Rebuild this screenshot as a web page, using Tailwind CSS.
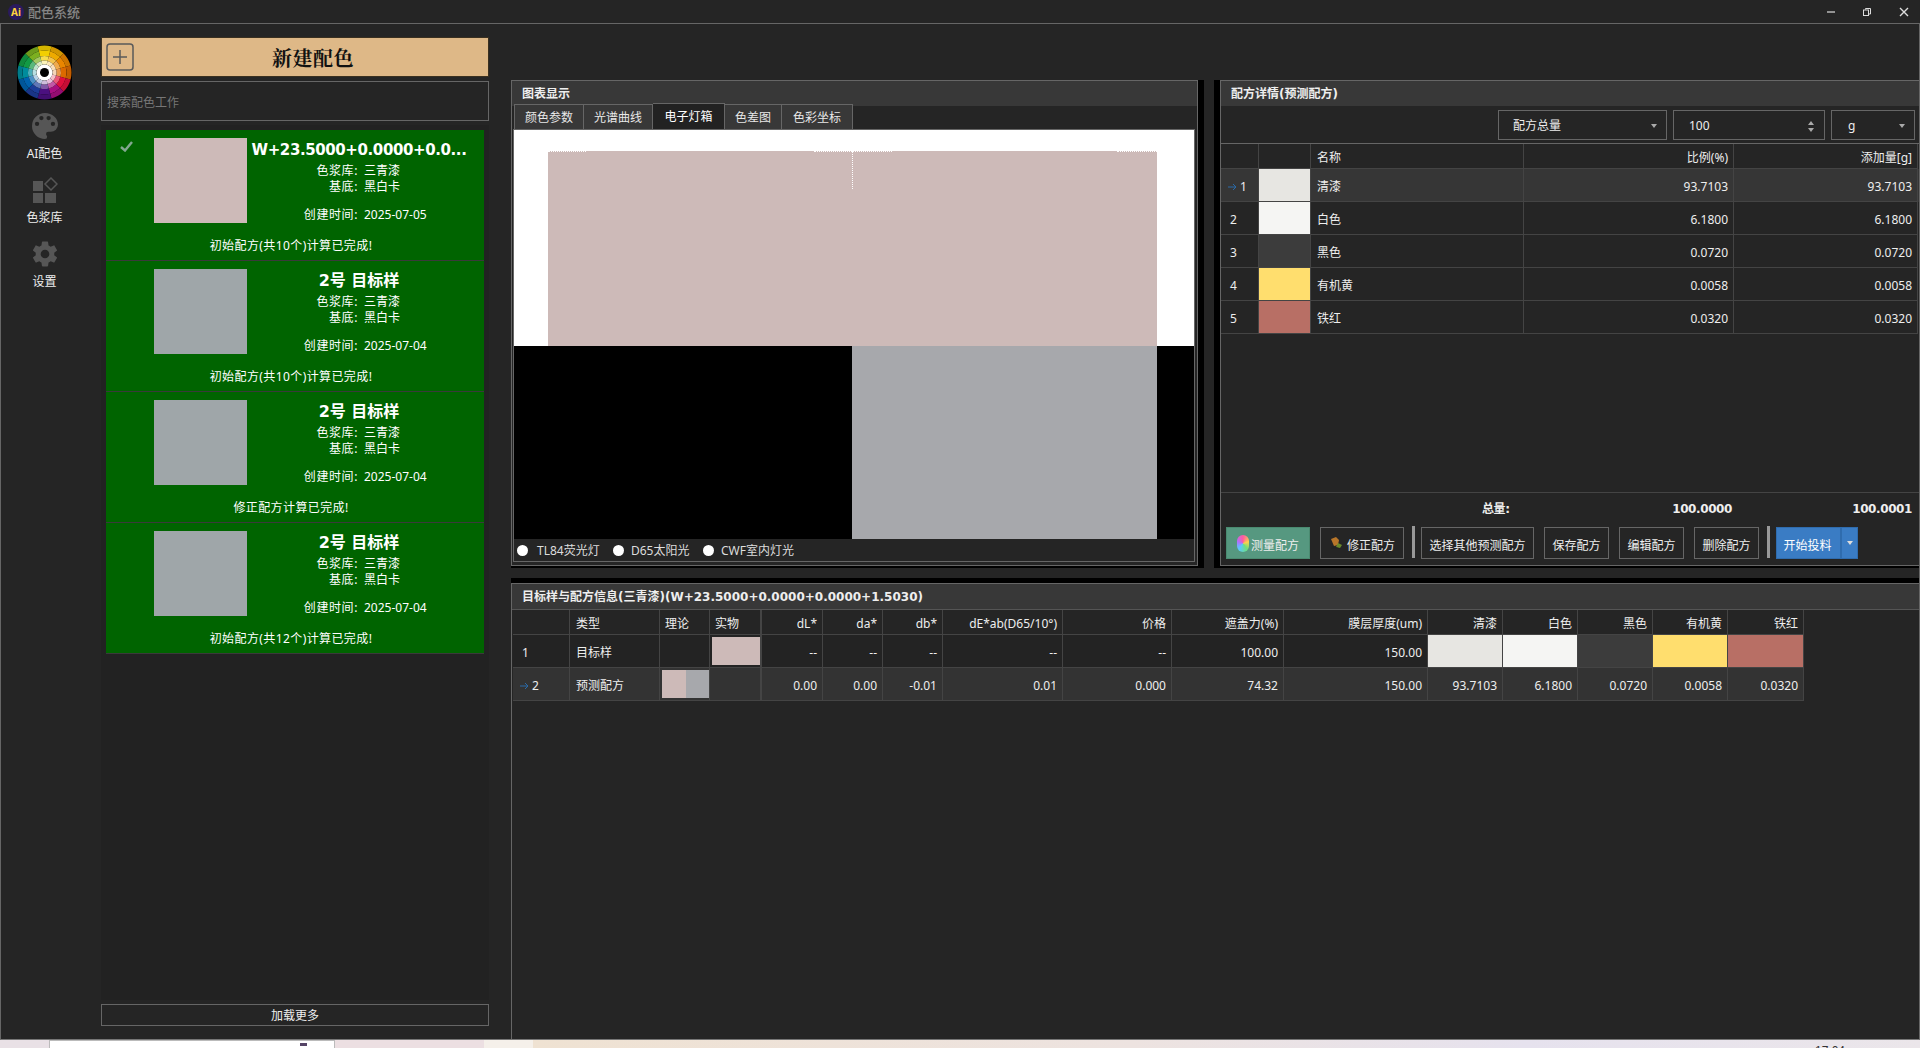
<!DOCTYPE html>
<html lang="zh">
<head>
  <meta charset="UTF-8" />
  <title>配色系统</title>
  <script src="https://cdn.jsdelivr.net/npm/@tailwindcss/browser@4"></script>
</head>
<body class="bg-[#252525]">
<div class="w-[1920px] h-[1048px] overflow-hidden flex flex-col bg-[#252525] text-[12px] leading-[16px] text-[#eeeeee] [font-family:'Noto_Sans','Noto_Sans_CJK_SC',sans-serif]">

  <!-- 标题栏 -->
  <div class="h-[23px] shrink-0 flex items-center pl-[8px] relative">
    <div class="w-[16px] h-[16px] rounded-full bg-[#2a1a5e] flex items-center justify-center text-[10px] font-bold text-[#ffd23c] leading-none">Ai</div>
    <span class="ml-[4px] text-[13px] text-[#858585] font-medium">配色系统</span>
    <div class="ml-auto flex items-center pr-[11px]">
      <svg class="w-[8px] h-[10px]" viewBox="0 0 8 10"><path d="M0 5h8" stroke="#ddd" stroke-width="1.2"/></svg>
      <svg class="w-[8px] h-[8px] ml-[28px]" viewBox="0 0 8 8" fill="none" stroke="#ddd"><path d="M2.5 1.5V.5h5V6H6"/><rect x=".5" y="2" width="5" height="5.5"/></svg>
      <svg class="w-[10px] h-[10px] ml-[28px]" viewBox="0 0 10 10"><path d="M1 1l8 8M9 1l-8 8" stroke="#ddd" stroke-width="1.4"/></svg>
    </div>
  </div>

  <!-- 主体 -->
  <div class="h-[1017px] shrink-0 flex border border-[#666666] border-b-[#777777]">

    <!-- 侧边栏 -->
    <div class="w-[87px] shrink-0 flex flex-col items-center pt-[21px]">
      <svg id="wheel" class="w-[55px] h-[55px] bg-black" viewBox="0 0 55 55"></svg>
      <div class="w-full h-[64px] mt-[13px] flex flex-col items-center">
        <svg class="w-[26px] h-[26px]" viewBox="3 3 18 18" fill="#565656"><path d="M17.5,12A1.5,1.5 0 0,1 16,10.5A1.5,1.5 0 0,1 17.5,9A1.5,1.5 0 0,1 19,10.5A1.5,1.5 0 0,1 17.5,12M14.5,8A1.5,1.5 0 0,1 13,6.5A1.5,1.5 0 0,1 14.5,5A1.5,1.5 0 0,1 16,6.5A1.5,1.5 0 0,1 14.5,8M9.5,8A1.5,1.5 0 0,1 8,6.5A1.5,1.5 0 0,1 9.5,5A1.5,1.5 0 0,1 11,6.5A1.5,1.5 0 0,1 9.5,8M6.5,12A1.5,1.5 0 0,1 5,10.5A1.5,1.5 0 0,1 6.5,9A1.5,1.5 0 0,1 8,10.5A1.5,1.5 0 0,1 6.5,12M12,3A9,9 0 0,0 3,12A9,9 0 0,0 12,21A1.5,1.5 0 0,0 13.5,19.5C13.5,19.11 13.35,18.76 13.11,18.5C12.88,18.23 12.73,17.88 12.73,17.5A1.5,1.5 0 0,1 14.23,16H16A5,5 0 0,0 21,11C21,6.58 16.97,3 12,3Z"/></svg>
        <span class="mt-[7px]">AI配色</span>
      </div>
      <div class="w-full h-[64px] flex flex-col items-center">
        <svg class="w-[26px] h-[26px]" viewBox="0 0 26 26" fill="#565656"><rect x="1" y="4" width="10" height="10"/><rect x="1" y="16" width="10" height="10"/><rect x="13" y="16" width="11" height="10"/><path d="M19 1l6 6-6 6-6-6z" fill="none" stroke="#565656" stroke-width="1.5"/></svg>
        <span class="mt-[7px]">色浆库</span>
      </div>
      <div class="w-full h-[64px] flex flex-col items-center">
        <svg class="w-[26px] h-[26px]" viewBox="1.5 1.5 21 21" fill="#565656"><path d="M12,15.5A3.5,3.5 0 0,1 8.5,12A3.5,3.5 0 0,1 12,8.5A3.5,3.5 0 0,1 15.5,12A3.5,3.5 0 0,1 12,15.5M19.43,12.97C19.47,12.65 19.5,12.33 19.5,12C19.5,11.67 19.47,11.34 19.43,11L21.54,9.37C21.73,9.22 21.78,8.95 21.66,8.73L19.66,5.27C19.54,5.05 19.27,4.96 19.05,5.05L16.56,6.05C16.04,5.66 15.5,5.32 14.87,5.07L14.5,2.42C14.46,2.18 14.25,2 14,2H10C9.75,2 9.54,2.18 9.5,2.42L9.13,5.07C8.5,5.32 7.96,5.66 7.44,6.05L4.95,5.05C4.73,4.96 4.46,5.05 4.34,5.27L2.34,8.73C2.21,8.95 2.27,9.22 2.46,9.37L4.57,11C4.53,11.34 4.5,11.67 4.5,12C4.5,12.33 4.53,12.65 4.57,12.97L2.46,14.63C2.27,14.78 2.21,15.05 2.34,15.27L4.34,18.73C4.46,18.95 4.73,19.03 4.95,18.95L7.44,17.94C7.96,18.34 8.5,18.68 9.13,18.93L9.5,21.58C9.54,21.82 9.75,22 10,22H14C14.25,22 14.46,21.82 14.5,21.58L14.87,18.93C15.5,18.67 16.04,18.34 16.56,17.94L19.05,18.95C19.27,19.03 19.54,18.95 19.66,18.73L21.66,15.27C21.78,15.05 21.73,14.78 21.54,14.63L19.43,12.97Z"/></svg>
        <span class="mt-[7px]">设置</span>
      </div>
    </div>

    <!-- 配色工作列表 -->
    <div class="w-[388px] ml-[13px] shrink-0 flex flex-col pt-[13px]">
      <div class="h-[40px] bg-[#deb887] border border-[#3a3020] flex items-center text-[#111111] pl-[4px]">
        <svg class="w-[28px] h-[28px] shrink-0" viewBox="0 0 28 28" fill="none" stroke="#5a5a5a" stroke-width="1.5"><rect x="1" y="1" width="26" height="26" rx="3"/><path d="M14 7v14M7 14h14"/></svg>
        <span class="flex-1 text-center pt-[2px] pl-[4px] text-[20px] leading-[24px] font-bold tracking-[0.5px] [font-family:'Noto_Serif_CJK_SC','Liberation_Serif','Noto_Sans_CJK_SC',serif]">新建配色</span>
      </div>
      <div class="h-[40px] mt-[4px] border border-[#666666] flex items-center pl-[5px] pt-[3px] text-[#777777]">搜索配色工作</div>
      <div id="cards" class="h-[875px] mt-[4px] bg-[#222222] px-[5px] pt-[5px]"></div>
      <div class="h-[22px] mt-[4px] border border-[#666666] flex items-center justify-center pt-[1px]">加载更多</div>
    </div>

    <!-- 右侧 -->
    <div class="w-[1408px] ml-[22px] shrink-0 flex flex-col pt-[56px]">
      <div class="h-[488px] flex shrink-0">

        <!-- 图表显示 -->
        <div class="w-[693px] shrink-0 border-r-[6px] border-b-[2px] border-black">
          <div class="h-full border border-[#666666] flex flex-col">
            <div class="h-[25px] shrink-0 bg-[#383838] pl-[10px] pt-[5px] font-bold">图表显示</div>
            <div class="h-[26px] -mt-[3px] shrink-0 flex items-end pl-[2px] text-[#e8e8e8]">
              <div class="w-[70px] h-[25px] pt-[1px] border border-[#666666] border-b-0 bg-[#383838] flex items-center justify-center">颜色参数</div>
              <div class="w-[69px] h-[25px] pt-[1px] border border-[#666666] border-l-0 border-b-0 bg-[#383838] flex items-center justify-center">光谱曲线</div>
              <div class="w-[72px] h-[26px] pt-[1px] border border-[#666666] border-l-0 border-b-0 bg-[#222222] flex items-center justify-center text-white">电子灯箱</div>
              <div class="w-[57px] h-[25px] pt-[1px] border border-[#666666] border-l-0 border-b-0 bg-[#383838] flex items-center justify-center">色差图</div>
              <div class="w-[71px] h-[25px] pt-[1px] border border-[#666666] border-l-0 border-b-0 bg-[#383838] flex items-center justify-center">色彩坐标</div>
            </div>
            <div class="flex-1 ml-[1px] mr-[2px] mb-[3px] border border-[#666666] flex flex-col">
              <div class="h-[216px] shrink-0 bg-white pt-[21px] pl-[34px]">
                <div class="relative w-[609px] h-[195px] bg-[#cdbab8]">
                  <div class="absolute left-[304px] top-0 h-[38px] border-l border-dotted border-white"></div>
                  <div class="absolute left-0 top-0 w-[38px] border-t border-dotted border-white"></div>
                  <div class="absolute left-[266px] top-0 w-[78px] border-t border-dotted border-white"></div>
                  <div class="absolute right-0 top-0 w-[40px] border-t border-dotted border-white"></div>
                </div>
              </div>
              <div class="h-[193px] shrink-0 bg-black pl-[338px]">
                <div class="w-[305px] h-full bg-[#a7a8ac]"></div>
              </div>
              <div class="flex-1 flex items-center pl-[3px] pt-[1px] text-[#dddddd]">
                <span class="w-[11px] h-[11px] rounded-full bg-white"></span><span class="ml-[9px] w-[76px]">TL84荧光灯</span>
                <span class="w-[11px] h-[11px] rounded-full bg-white"></span><span class="ml-[2px] pl-[5px] w-[77px]">D65太阳光</span>
                <span class="w-[11px] h-[11px] rounded-full bg-white"></span><span class="ml-[2px] pl-[5px]">CWF室内灯光</span>
              </div>
            </div>
          </div>
        </div>

        <div class="w-[10px] shrink-0"></div>

        <!-- 配方详情 -->
        <div class="w-[705px] shrink-0 border-l-[6px] border-b-[2px] border-black">
          <div class="h-full border border-[#666666] border-r-0 flex flex-col">
            <div class="h-[25px] shrink-0 bg-[#383838] pl-[10px] pt-[5px] font-bold whitespace-nowrap [font-family:'DejaVu_Sans','Noto_Sans_CJK_SC',sans-serif]">配方详情(预测配方)</div>
            <div class="h-[37px] shrink-0 flex items-start pt-[4px] pl-[277px]">
              <div class="w-[169px] h-[30px] pt-[2px] border border-[#666666] flex items-center pl-[14px] pr-[9px]">配方总量<span class="ml-auto border-x-[3px] border-t-[4px] border-x-transparent border-t-[#aaaaaa]"></span></div>
              <div class="w-[152px] h-[30px] pt-[2px] ml-[6px] border border-[#666666] flex items-center pl-[15px] pr-[10px]">100
                <span class="ml-auto flex flex-col gap-[3px]"><span class="border-x-[3px] border-b-[4px] border-x-transparent border-b-[#aaaaaa]"></span><span class="border-x-[3px] border-t-[4px] border-x-transparent border-t-[#aaaaaa]"></span></span>
              </div>
              <div class="w-[84px] h-[30px] pt-[2px] ml-[6px] border border-[#666666] flex items-center pl-[16px] pr-[9px]">g<span class="ml-auto border-x-[3px] border-t-[4px] border-x-transparent border-t-[#aaaaaa]"></span></div>
            </div>
            <div id="detail" class="shrink-0 border-t border-[#666666]"></div>
            <div class="flex-1"></div>
            <div class="h-[35px] shrink-0 border-t border-[#444444] relative font-bold [font-family:'DejaVu_Sans','Noto_Sans_CJK_SC',sans-serif] tracking-[-0.4px]">
              <span class="absolute left-[261px] top-[8px]">总量:</span>
              <span class="absolute right-[187px] top-[8px]">100.0000</span>
              <span class="absolute right-[7px] top-[8px]">100.0001</span>
            </div>
            <div class="h-[38px] shrink-0 flex items-start pl-[5px]">
              <button class="w-[84px] h-[32px] pt-[5px] bg-[#569880] border border-[#4a8a70] flex items-center justify-center gap-[2px]"><span class="w-[12px] h-[17px] -mt-[5px] rounded-full bg-[conic-gradient(#ff5aa0,#ffd24a,#6fe07a,#5ac8ff,#b070ff,#ff5aa0)]"></span>测量配方</button>
              <button class="w-[84px] h-[32px] pt-[5px] ml-[10px] border border-[#666666] flex items-center justify-center gap-[4px]"><svg class="w-[14px] h-[14px] -mt-[5px]" viewBox="0 0 14 14"><path d="M2 3l5-2 3 3-1 5-4 1z" fill="#b8762a"/><path d="M9 7l4 2-2 3-4-1z" fill="#6a8a2a"/><path d="M3 10l9 3H2z" fill="#222"/></svg>修正配方</button>
              <div class="w-[3px] h-[32px] ml-[8px] -mt-[1px] bg-[#999999]"></div>
              <button class="w-[113px] h-[32px] pt-[5px] ml-[6px] border border-[#666666]">选择其他预测配方</button>
              <button class="w-[65px] h-[32px] pt-[5px] ml-[10px] border border-[#666666]">保存配方</button>
              <button class="w-[65px] h-[32px] pt-[5px] ml-[10px] border border-[#666666]">编辑配方</button>
              <button class="w-[65px] h-[32px] pt-[5px] ml-[10px] border border-[#666666]">删除配方</button>
              <div class="w-[3px] h-[32px] ml-[8px] -mt-[1px] bg-[#999999]"></div>
              <button class="w-[65px] h-[32px] pt-[5px] pr-[2px] ml-[6px] bg-[#3a7cc4] border border-[#2f6cae] text-white">开始投料</button>
              <button class="w-[17px] h-[32px] bg-[#3a7cc4] border border-[#2f6cae] border-l-[#2f6cae] flex items-center justify-center"><span class="border-x-[3px] border-t-[4px] border-x-transparent border-t-[#dddddd]"></span></button>
            </div>
          </div>
        </div>
      </div>

      <!-- 目标样与配方信息 -->
      <div class="mt-[10px] flex-1 border-t-[5px] border-black">
        <div class="h-full border-t border-l border-[#666666] flex flex-col">
          <div class="h-[26px] shrink-0 bg-[#383838] border-b border-[#555555] pl-[10px] pt-[5px] font-bold whitespace-nowrap [font-family:'DejaVu_Sans','Noto_Sans_CJK_SC',sans-serif]">目标样与配方信息(三青漆)(W+23.5000+0.0000+0.0000+1.5030)</div>
          <div id="info" class="ml-[1px] w-[1291px]"></div>
        </div>
      </div>
    </div>
  </div>

  <!-- 底部露出的桌面 -->
  <div class="h-[8px] shrink-0 flex bg-[#e9e1e6] overflow-hidden">
    <div class="w-[49px]"></div>
    <div class="w-[286px] bg-white border-t border-x border-[#bbbbbb] relative"><span class="absolute right-[27px] top-[2px] w-[7px] h-[3px] bg-[#554466]"></span></div>
    <div class="w-[149px] bg-[#ecdfe2]"></div>
    <div class="w-[49px] bg-[#f5f0ea]"></div>
    <div class="w-[600px] bg-[linear-gradient(90deg,#efe2d2,#ede3e0)]"></div>
    <div class="flex-1 bg-[linear-gradient(90deg,#ede3e0,#e6e2ee,#ebe6ea)] pl-[682px] pt-[4px] text-[#333333] text-[12px] leading-[14px] [font-family:'Liberation_Sans',sans-serif]">17:04</div>
  </div>
</div>

<script>
// 色轮
const hues = ["#f2cf00","#eeaa00","#ea8600","#dc6a00","#e0103c","#a80f80","#4b1080","#1c3c98","#0062ae","#008c9c","#129a44","#7cb020"];
function mix(hex, t, to) {
  const c = [1, 3, 5].map(i => parseInt(hex.substr(i, 2), 16));
  return `rgb(${c.map(v => Math.round(v + (to - v) * t)).join(",")})`;
}
function sector(r0, r1, a0, a1) {
  const p = (r, a) => `${(27.5 + r * Math.sin(a)).toFixed(2)} ${(27.5 - r * Math.cos(a)).toFixed(2)}`;
  return `M${p(r0, a0)}L${p(r1, a0)}A${r1} ${r1} 0 0 1 ${p(r1, a1)}L${p(r0, a1)}A${r0} ${r0} 0 0 0 ${p(r0, a0)}Z`;
}
const rings = [[22, 27, 0.12, 0], [16.5, 22, 0, 255], [12, 16.5, 0.3, 255], [8, 12, 0.72, 255]];
let wheel = "";
hues.forEach((h, i) => {
  const a = (i - 0.5) * Math.PI / 6, b = (i + 0.5) * Math.PI / 6;
  rings.forEach(([r0, r1, t, to], k) => {
    const col = k === 0 ? mix(h, t, 0) : mix(h, t, to);
    wheel += `<path d="${sector(r0, r1, a, b)}" fill="${col}"/>`;
  });
});
wheel += `<circle cx="27.5" cy="27.5" r="8" fill="#fff"/><circle cx="27.5" cy="27.5" r="4.5" fill="#000"/>`;
document.getElementById("wheel").innerHTML = wheel;

// 配色工作卡片
const cards = [
  { title: "W+23.5000+0.0000+0.0...", size: "text-[15px] tracking-[-0.4px]", color: "bg-[#cdbab8]", date: "2025-07-05", msg: "初始配方(共10个)计算已完成!", check: true },
  { title: "2号 目标样", size: "text-[16px]", color: "bg-[#9fa6a9]", date: "2025-07-04", msg: "初始配方(共10个)计算已完成!" },
  { title: "2号 目标样", size: "text-[16px]", color: "bg-[#9fa6a9]", date: "2025-07-04", msg: "修正配方计算已完成!" },
  { title: "2号 目标样", size: "text-[16px]", color: "bg-[#9fa6a9]", date: "2025-07-04", msg: "初始配方(共12个)计算已完成!" },
];
document.getElementById("cards").innerHTML = cards.map(c => `
  <div class="h-[131px] bg-[#006400] border-b border-[#3a3a3a] text-white flex flex-col">
    <div class="h-[107px] flex pt-[8px]">
      <div class="w-[48px] shrink-0 pl-[14px] pt-[3px]">
        ${c.check ? `<svg class="w-[13px] h-[11px]" viewBox="0 0 13 11" fill="none" stroke="#82a890" stroke-width="2.4"><path d="M1 6l4 3.5L12 1"/></svg>` : ""}
      </div>
      <div class="w-[93px] h-[85px] shrink-0 ${c.color}"></div>
      <div class="w-[216px] ml-[4px] shrink-0">
        <div class="h-[24px] text-center leading-[24px] font-bold whitespace-nowrap [font-family:'DejaVu_Sans','Noto_Sans_CJK_SC',sans-serif] ${c.size}">${c.title}</div>
        <div class="grid grid-cols-[107px_1fr] gap-x-[6px] mt-[1px]">
          <span class="text-right tracking-[0.6px]">色浆库:</span><span>三青漆</span>
          <span class="text-right tracking-[0.6px]">基底:</span><span>黑白卡</span>
          <span class="text-right tracking-[0.6px] mt-[12px]">创建时间:</span><span class="mt-[12px]">${c.date}</span>
        </div>
      </div>
    </div>
    <div class="h-[16px] mt-[1px] text-center pr-[8px] tracking-[0.4px] whitespace-nowrap">${c.msg}</div>
  </div>`).join("");

const arrow = `<svg class="w-[9px] h-[8px] mr-[3px]" viewBox="0 0 9 8" fill="none" stroke="#2a6aa8"><path d="M0 4h8M5 1l3 3-3 3"/></svg>`;

// 配方详情表
const colors = [["清漆", "bg-[#e7e6e2]", "93.7103"], ["白色", "bg-[#f5f5f3]", "6.1800"], ["黑色", "bg-[#3c3c3c]", "0.0720"], ["有机黄", "bg-[#ffde6e]", "0.0058"], ["铁红", "bg-[#b86f65]", "0.0320"]];
const dCols = "grid grid-cols-[38px_52px_213px_210px_184px]";
const dCell = "border-r border-b border-[#444444] flex items-center pt-[3px]";
document.getElementById("detail").innerHTML = `
  <div class="${dCols} h-[25px]">
    <div class="${dCell}"></div><div class="${dCell}"></div>
    <div class="${dCell} pl-[6px]">名称</div>
    <div class="${dCell} justify-end pr-[5px]">比例(%)</div>
    <div class="${dCell} justify-end pr-[5px]">添加量[g]</div>
  </div>` + colors.map((c, i) => `
  <div class="${dCols} h-[33px] ${i === 0 ? "bg-[#363636]" : ""}">
    <div class="${dCell} ${i === 0 ? "pl-[7px]" : "pl-[9px]"}">${i === 0 ? arrow : ""}${i + 1}</div>
    <div class="${dCell} ${c[1]}"></div>
    <div class="${dCell} pl-[6px]">${c[0]}</div>
    <div class="${dCell} justify-end pr-[5px]">${c[2]}</div>
    <div class="${dCell} justify-end pr-[5px]">${c[2]}</div>
  </div>`).join("");

// 目标样表
const iCols = "grid grid-cols-[57px_90px_50px_52px_61px_60px_60px_120px_109px_112px_144px_75px_75px_75px_75px_76px]";
const iCell = "border-r border-b border-[#444444] flex items-center pt-[4px]";
const right = `${iCell} justify-end pr-[5px]`;
const head = ["dL*", "da*", "db*", "dE*ab(D65/10°)", "价格", "遮盖力(%)", "膜层厚度(um)", "清漆", "白色", "黑色", "有机黄", "铁红"];
const r1 = ["--", "--", "--", "--", "--", "100.00", "150.00"];
const r2 = ["0.00", "0.00", "-0.01", "0.01", "0.000", "74.32", "150.00", "93.7103", "6.1800", "0.0720", "0.0058", "0.0320"];
document.getElementById("info").innerHTML = `
  <div class="${iCols} h-[25px]">
    <div class="${iCell}"></div>
    <div class="${iCell} pl-[6px]">类型</div>
    <div class="${iCell} pl-[5px]">理论</div>
    <div class="${iCell} pl-[5px] border-r-[2px]">实物</div>
    ${head.map(h => `<div class="${right}">${h}</div>`).join("")}
  </div>
  <div class="${iCols} h-[33px] bg-[#232323]">
    <div class="${iCell} pl-[9px]">1</div>
    <div class="${iCell} pl-[6px]">目标样</div>
    <div class="${iCell}"></div>
    <div class="border-r-[2px] border-b border-[#444444] pl-[2px] py-[2px]"><div class="w-full h-full bg-[#cdbab8]"></div></div>
    ${r1.map(v => `<div class="${right}">${v}</div>`).join("")}
    ${colors.map(c => `<div class="${iCell} ${c[1]}"></div>`).join("")}
  </div>
  <div class="${iCols} h-[33px] bg-[#333333]">
    <div class="${iCell} pl-[7px]">${arrow}2</div>
    <div class="${iCell} pl-[6px]">预测配方</div>
    <div class="border-r border-b border-[#444444] pl-[2px] py-[2px] flex"><div class="w-1/2 h-full bg-[#cdbab8]"></div><div class="w-1/2 h-full bg-[#a7a8ac]"></div></div>
    <div class="${iCell} border-r-[2px]"></div>
    ${r2.map(v => `<div class="${right}">${v}</div>`).join("")}
  </div>`;
</script>
</body>
</html>
